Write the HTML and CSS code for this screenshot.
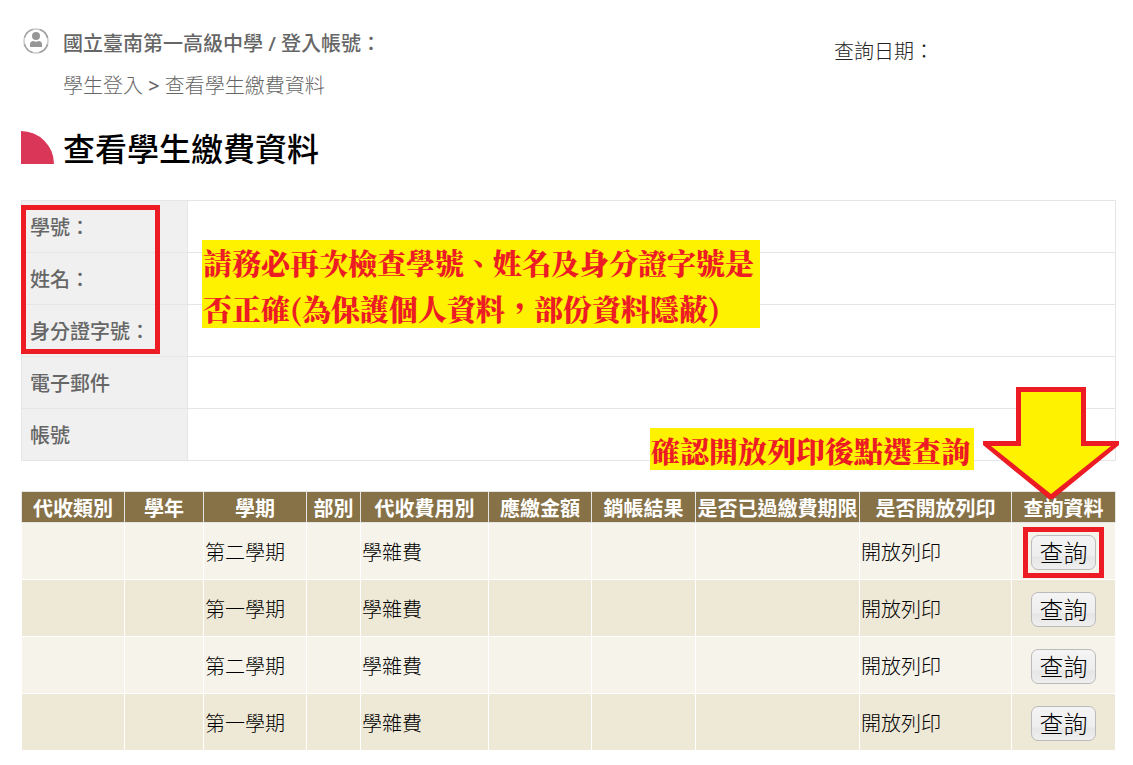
FILE: index.html
```
<!DOCTYPE html>
<html lang="zh-Hant">
<head>
    <meta charset="UTF-8">
    <meta name="viewport" content="width=device-width, initial-scale=1.0">
    <title>查看學生繳費資料</title>
    <link rel="stylesheet" href="styles.css">
</head>
<body>

    <!-- Header -->
    <header class="header">
        <svg class="user-icon" viewBox="0 0 26 26" aria-hidden="true">
            <circle cx="13" cy="13" r="12" fill="none" stroke="#cacaca" stroke-width="1.5"/>
            <circle cx="13" cy="13" r="12" fill="none" stroke="#a0a0a0" stroke-width="1.5" stroke-dasharray="12 6.85" stroke-dashoffset="-3.4"/>
            <circle cx="13" cy="8" r="4" fill="#969696"/>
            <path d="M7 19V16.500Q7 13 10.500 13Q13 14.500 15.500 13Q19 13 19 16.500V19Z" fill="#969696"/>
        </svg>
        <div class="header-text">
            <div class="account">國立臺南第一高級中學 / 登入帳號：</div>
            <nav class="breadcrumb"><a href="#">學生登入</a> <b>&gt;</b> <a href="#">查看學生繳費資料</a></nav>
        </div>
        <div class="query-date">查詢日期：</div>
    </header>

    <main>
        <div class="title">
            <span class="title-mark"></span>
            <h1>查看學生繳費資料</h1>
        </div>

        <!-- Student Info -->
        <section class="info">
            <table class="info-table">
                <tr><th scope="row">學號：</th><td></td></tr>
                <tr><th scope="row">姓名：</th><td></td></tr>
                <tr><th scope="row">身分證字號：</th><td></td></tr>
                <tr><th scope="row">電子郵件</th><td></td></tr>
                <tr><th scope="row">帳號</th><td></td></tr>
            </table>
            <div class="info-frame"></div>
            <p class="callout callout-check">請務必再次檢查學號、姓名及身分證字號是<br>否正確(為保護個人資料，部份資料隱蔽)</p>
            <p class="callout callout-query">確認開放列印後點選查詢</p>
        </section>

        <!-- Payment List -->
        <section class="payment">
            <table class="payment-table">
                <colgroup>
                    <col class="col-type">
                    <col class="col-year">
                    <col class="col-term">
                    <col class="col-dept">
                    <col class="col-fee">
                    <col class="col-amount">
                    <col class="col-result">
                    <col class="col-expired">
                    <col class="col-print">
                    <col class="col-query">
                </colgroup>
                <thead>
                    <tr>
                        <th>代收類別</th>
                        <th>學年</th>
                        <th>學期</th>
                        <th>部別</th>
                        <th>代收費用別</th>
                        <th>應繳金額</th>
                        <th>銷帳結果</th>
                        <th>是否已過繳費期限</th>
                        <th>是否開放列印</th>
                        <th>查詢資料</th>
                    </tr>
                </thead>
                <tbody>
                    <tr>
                        <td></td><td></td><td>第二學期</td><td></td><td>學雜費</td><td></td><td></td><td></td><td>開放列印</td>
                        <td class="action"><span class="marked"><button type="button">查詢</button></span></td>
                    </tr>
                    <tr>
                        <td></td><td></td><td>第一學期</td><td></td><td>學雜費</td><td></td><td></td><td></td><td>開放列印</td>
                        <td class="action"><button type="button">查詢</button></td>
                    </tr>
                    <tr>
                        <td></td><td></td><td>第二學期</td><td></td><td>學雜費</td><td></td><td></td><td></td><td>開放列印</td>
                        <td class="action"><button type="button">查詢</button></td>
                    </tr>
                    <tr>
                        <td></td><td></td><td>第一學期</td><td></td><td>學雜費</td><td></td><td></td><td></td><td>開放列印</td>
                        <td class="action"><button type="button">查詢</button></td>
                    </tr>
                </tbody>
            </table>
            <svg class="arrow" viewBox="0 0 138 114" aria-hidden="true">
                <path d="M36.500 2.500H101.500V56.500H136L69 110.500L2 56.500H36.500Z" fill="#fff200"/>
                <path d="M34 0H104V54H137V58L71 112H67L1 58V54H34ZM39 5V59H9L69 107L129 59H99V5Z" fill="#ed1c24" fill-rule="evenodd"/>
            </svg>
        </section>
    </main>
</body>
</html>
```

FILE: styles.css
```
* {
    box-sizing: border-box;
}

body {
    margin: 0;
    padding: 28px 17px 14px 21px;
    background: #fff;
    color: #000;
    font-family: "Noto Sans", "Noto Sans CJK TC", sans-serif;
    font-size: 20px;
    line-height: 30px;
}

/* Header */
.header {
    display: flex;
    align-items: flex-start;
}

.user-icon {
    width: 26px;
    height: 26px;
    margin: 0 14px 0 2px;
}

.header-text {
    flex: 1;
    display: flex;
    flex-direction: column;
    gap: 12px;
    padding-top: 1px;
    color: #666;
}

.account {
    font-weight: 500;
}

.breadcrumb,
.query-date {
    font-weight: 300;
}

.breadcrumb a {
    color: inherit;
    text-decoration: none;
}

.breadcrumb b {
    font-weight: 500;
}

.query-date {
    width: 282px;
    padding-top: 9px;
    color: #222;
}

/* Page Title */
.title {
    display: flex;
    align-items: flex-start;
    gap: 9px;
    margin: 26px 0 29px;
}

.title-mark {
    width: 33px;
    height: 33px;
    margin-top: 4px;
    background: #d93658;
    border-top-right-radius: 100%;
}

.title h1 {
    margin: 0;
    font-size: 32px;
    font-weight: 500;
    line-height: 44px;
}

/* Student Info */
.info,
.payment {
    position: relative;
}

table {
    width: 100%;
    border-collapse: collapse;
    table-layout: fixed;
}

.info-table th,
.info-table td {
    height: 52px;
    padding: 3px 8px 0;
    border: 1px solid #e5e5e5;
}

.info-table th {
    width: 166px;
    background: #f0f0f0;
    color: #666;
    font-weight: 500;
    text-align: left;
    white-space: nowrap;
}

.info-frame {
    position: absolute;
    top: 5px;
    left: 0;
    width: 139px;
    height: 149px;
    border: 5px solid #ed1c24;
}

.callout {
    position: absolute;
    margin: 0;
    padding: 0 1px;
    background: #fff200;
    color: #ed1c24;
    font-family: "Noto Serif CJK TC", "Noto Sans CJK TC", serif;
    font-size: 29px;
    font-weight: 900;
    line-height: 46px;
    white-space: nowrap;
}

.callout-check {
    top: 40px;
    left: 181px;
    width: 558px;
    height: 88px;
}

.callout-query {
    top: 228px;
    right: 142px;
    width: 324px;
    height: 42px;
}

/* Payment List */
.payment {
    margin-top: 30px;
}

.col-type,
.col-term,
.col-amount {
    width: 103px;
}

.col-year {
    width: 79px;
}

.col-dept {
    width: 54px;
}

.col-fee {
    width: 128px;
}

.col-result,
.col-query {
    width: 104px;
}

.col-expired {
    width: 164px;
}

.col-print {
    width: 152px;
}

.payment-table th {
    height: 31px;
    padding: 3px 0 0;
    border: 1px solid #e5e5e5;
    background: #877248;
    color: #fff;
    font-weight: 700;
    line-height: 27px;
    white-space: nowrap;
}

.payment-table td {
    height: 57px;
    padding: 3px 1px 0;
    border: 1px solid #fff;
    background: #f5f3ea;
    font-weight: 300;
}

.payment-table tbody tr:nth-child(even) td {
    background: #eee9d7;
}

.payment-table .action {
    text-align: center;
}

.action button {
    display: block;
    width: 65px;
    height: 35px;
    margin: 0 auto;
    padding: 0;
    border: 1px solid #bbb;
    border-radius: 7px;
    background: linear-gradient(#f4f4f4, #eee 60%, #e6e6e6 64%, #efefef);
    color: #000;
    font-family: inherit;
    font-size: 24px;
    font-weight: 300;
    line-height: 32px;
    cursor: pointer;
}

.marked {
    position: relative;
    display: block;
    width: 65px;
    margin: 0 auto;
}

.marked::after {
    content: "";
    position: absolute;
    inset: -8px;
    border: 5px solid #ed1c24;
    pointer-events: none;
}

.arrow {
    position: absolute;
    top: -104px;
    right: -4px;
    width: 138px;
    height: 114px;
}
```
